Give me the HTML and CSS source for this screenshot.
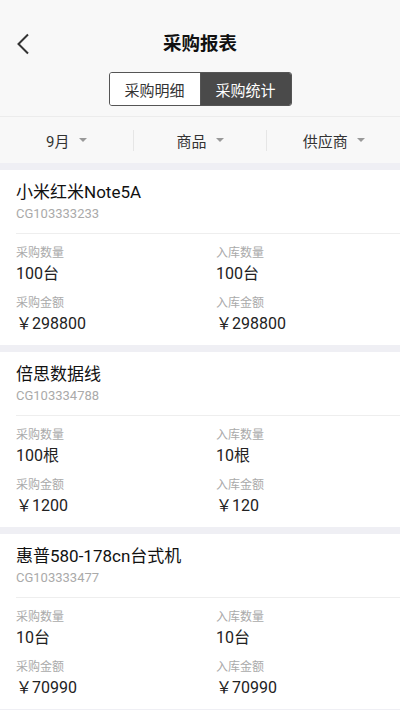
FILE: index.html
```html
<!DOCTYPE html>
<html lang="zh-CN">
<head>
    <meta charset="UTF-8">
    <meta name="viewport" content="width=device-width, initial-scale=1.0">
    <title>采购报表</title>
    <link rel="stylesheet" href="styles.css">
</head>
<body>

    <!-- Header -->
    <div class="header">
        <div class="title-row">
            <a class="back">
                <svg width="14" height="22" viewBox="0 0 14 22">
                    <polyline points="11,1.5 1.5,11 11,20.5" fill="none" stroke="#333" stroke-width="2"/>
                </svg>
            </a>
            <h1 class="title">采购报表</h1>
        </div>
        <div class="tabs">
            <span class="tab">采购明细</span>
            <span class="tab active">采购统计</span>
        </div>
    </div>

    <!-- Filter Bar -->
    <div class="filters">
        <div class="filter">9月<i class="caret"></i></div>
        <div class="filter">商品<i class="caret"></i></div>
        <div class="filter">供应商<i class="caret"></i></div>
    </div>

    <!-- Report List -->
    <div class="list">
        <div class="card">
            <div class="name">小米红米Note5A</div>
            <div class="code">CG103333233</div>
            <div class="stats">
                <div class="stat"><div class="label">采购数量</div><div class="value">100台</div></div>
                <div class="stat"><div class="label">入库数量</div><div class="value">100台</div></div>
                <div class="stat"><div class="label">采购金额</div><div class="value">￥298800</div></div>
                <div class="stat"><div class="label">入库金额</div><div class="value">￥298800</div></div>
            </div>
        </div>

        <div class="card">
            <div class="name">倍思数据线</div>
            <div class="code">CG103334788</div>
            <div class="stats">
                <div class="stat"><div class="label">采购数量</div><div class="value">100根</div></div>
                <div class="stat"><div class="label">入库数量</div><div class="value">10根</div></div>
                <div class="stat"><div class="label">采购金额</div><div class="value">￥1200</div></div>
                <div class="stat"><div class="label">入库金额</div><div class="value">￥120</div></div>
            </div>
        </div>

        <div class="card">
            <div class="name">惠普580-178cn台式机</div>
            <div class="code">CG103333477</div>
            <div class="stats">
                <div class="stat"><div class="label">采购数量</div><div class="value">10台</div></div>
                <div class="stat"><div class="label">入库数量</div><div class="value">10台</div></div>
                <div class="stat"><div class="label">采购金额</div><div class="value">￥70990</div></div>
                <div class="stat"><div class="label">入库金额</div><div class="value">￥70990</div></div>
            </div>
        </div>
    </div>

</body>
</html>
```

FILE: styles.css
```css
/* General */
body {
    margin: 0;
    font-family: Roboto, "Noto Sans CJK SC", sans-serif;
    background-color: #efeff4;
    color: #222;
    height: 710px;
    overflow: hidden;
}

/* Header */
.header {
    background-color: #f8f8f8;
    padding: 30px 0 10px;
    border-bottom: 1px solid #ececec;
}

.title-row {
    position: relative;
    height: 28px;
}

.back {
    position: absolute;
    left: 17px;
    top: 3px;
    line-height: 0;
}

.title {
    margin: 0;
    text-align: center;
    font-size: 18.5px;
    font-weight: 600;
    line-height: 28px;
    color: #111;
}

/* Segmented tabs */
.tabs {
    display: flex;
    width: 183px;
    height: 34px;
    margin: 14px auto 0;
    border: 1px solid #555;
    border-radius: 3px;
    overflow: hidden;
    box-sizing: border-box;
}

.tab {
    flex: 1;
    display: flex;
    align-items: center;
    justify-content: center;
    font-size: 15px;
    color: #333;
    background-color: #fff;
}

.tab.active {
    background-color: #4a4a4a;
    color: #fff;
    border-left: 1px solid #555;
}

/* Filter bar */
.filters {
    display: flex;
    align-items: center;
    height: 46px;
    background-color: #f8f8f8;
}

.filter {
    flex: 1;
    display: flex;
    align-items: center;
    justify-content: center;
    font-size: 15px;
    color: #333;
    height: 21px;
    border-left: 1px solid #e6e6e6;
}

.filter:first-child {
    border-left: none;
}

.caret {
    width: 0;
    height: 0;
    margin-left: 9px;
    border-left: 4px solid transparent;
    border-right: 4px solid transparent;
    border-top: 4px solid #999;
}

/* Cards */
.list {
    padding-top: 7px;
}

.card {
    background-color: #fff;
    padding: 10px 0 9px;
    margin-bottom: 7px;
}

.name {
    padding-left: 16px;
    font-size: 17px;
    line-height: 24px;
    color: #111;
}

.code {
    padding-left: 16px;
    font-size: 13px;
    line-height: 20px;
    color: #aaa;
}

.stats {
    display: grid;
    grid-template-columns: 200px 1fr;
    row-gap: 8px;
    margin: 9px 0 0 16px;
    padding-top: 10px;
    border-top: 1px solid #eee;
}

.label {
    font-size: 12px;
    line-height: 18px;
    color: #aaa;
}

.value {
    font-size: 16px;
    line-height: 24px;
    color: #222;
}
```
